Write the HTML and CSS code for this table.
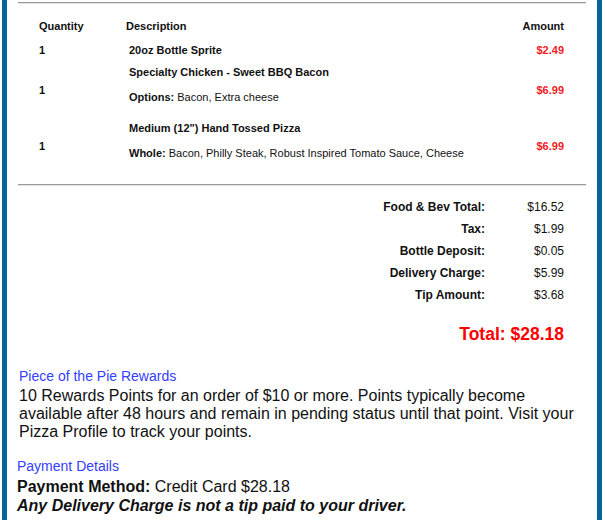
FILE: index.html
```html
<!DOCTYPE html>
<html>
<head>
<meta charset="utf-8">
<link rel="stylesheet" href="styles.css">
</head>
<body>
<div class="page">
  <hr class="rule rule-top">
  <div class="items">
    <div class="row head">
      <div class="qty">Quantity</div>
      <div class="desc">Description</div>
      <div class="amt">Amount</div>
    </div>
    <div class="row r1">
      <div class="qty">1</div>
      <div class="desc item"><div class="name">20oz Bottle Sprite</div></div>
      <div class="amt price">$2.49</div>
    </div>
    <div class="row r2">
      <div class="qty">1</div>
      <div class="desc item multi">
        <div class="name">Specialty Chicken - Sweet BBQ Bacon</div>
        <div class="opts"><b>Options:</b> Bacon, Extra cheese</div>
      </div>
      <div class="amt price">$6.99</div>
    </div>
    <div class="row r3">
      <div class="qty">1</div>
      <div class="desc item multi">
        <div class="name">Medium (12") Hand Tossed Pizza</div>
        <div class="opts"><b>Whole:</b> Bacon, Philly Steak, Robust Inspired Tomato Sauce, Cheese</div>
      </div>
      <div class="amt price">$6.99</div>
    </div>
  </div>
  <hr class="rule rule-mid">
  <div class="totals">
    <div class="tl">Food &amp; Bev Total:</div><div class="tv">$16.52</div>
    <div class="tl">Tax:</div><div class="tv">$1.99</div>
    <div class="tl">Bottle Deposit:</div><div class="tv">$0.05</div>
    <div class="tl">Delivery Charge:</div><div class="tv">$5.99</div>
    <div class="tl">Tip Amount:</div><div class="tv">$3.68</div>
  </div>
  <div class="grand">Total: $28.18</div>
  <div class="rewards">
    <div class="sect-title">Piece of the Pie Rewards</div>
    <p class="body-text">10 Rewards Points for an order of $10 or more. Points typically become available after 48 hours and remain in pending status until that point. Visit your Pizza Profile to track your points.</p>
  </div>
  <div class="payment">
    <div class="sect-title">Payment Details</div>
    <div class="pay-line"><b>Payment Method:</b> Credit Card $28.18</div>
    <div class="pay-note">Any Delivery Charge is not a tip paid to your driver.</div>
  </div>
</div>
</body>
</html>
```

FILE: styles.css
```css
html, body {
  margin: 0;
  padding: 0;
  background: #fff;
}
body {
  font-family: "Liberation Sans", Arial, sans-serif;
  color: #111;
}
.page {
  margin-left: 2px;
  width: 590px;
  min-height: 520px;
  border-left: 5px solid #03669a;
  border-right: 5px solid #03669a;
  padding-top: 2px;
  box-sizing: content-box;
  overflow: hidden;
}
.rule {
  margin: 0 11px;
  border: 0;
  height: 0;
  border-top: 1px solid #9a9a9a;
  border-bottom: 1px solid #e2e2e2;
}
.items {
  padding: 0 33px 0 32px;
  margin-top: 14px;
  font-size: 11px;
  font-weight: bold;
}
.row {
  display: grid;
  grid-template-columns: 87px 1fr auto;
  align-items: center;
  line-height: 16px;
}
.r1 { margin-top: 8px; }
.r2 { margin-top: 6px; }
.r3 { margin-top: 4px; }
.item { padding-left: 3px; }
.multi { padding-bottom: 11px; }
.opts {
  margin-top: 9px;
  font-weight: normal;
}
.opts b { font-weight: bold; }
.amt { text-align: right; }
.price { color: #f31a22; }
.rule-mid { margin-top: 12px; }
.totals {
  display: grid;
  grid-template-columns: 1fr 79px;
  padding-right: 33px;
  margin-top: 10px;
  font-size: 12px;
  line-height: 22px;
}
.tl {
  text-align: right;
  font-weight: bold;
}
.tv { text-align: right; }
.grand {
  text-align: right;
  padding-right: 33px;
  margin-top: 18px;
  font-size: 17.5px;
  line-height: 21px;
  font-weight: bold;
  color: #ff0000;
}
.rewards {
  margin-top: 23px;
  padding-left: 12px;
}
.sect-title {
  font-size: 14px;
  line-height: 16px;
  color: #3340ff;
}
.body-text {
  margin: 3px 0 0;
  width: 568px;
  font-size: 16px;
  line-height: 18px;
}
.payment {
  margin-top: 17px;
  padding-left: 10px;
}
.pay-line {
  margin-top: 3px;
  font-size: 16px;
  line-height: 19px;
}
.pay-note {
  font-size: 16px;
  line-height: 19px;
  font-weight: bold;
  font-style: italic;
}
```
